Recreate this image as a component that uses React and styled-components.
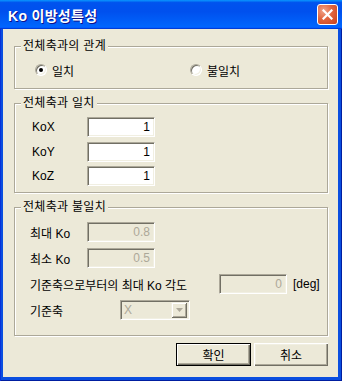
import React from 'react';
import styled, { createGlobalStyle } from 'styled-components';

const Global = createGlobalStyle`
    html, body {
        margin: 0;
        padding: 0;
        background: #fff;
    }
    body {
        font-family: "Liberation Sans", "Noto Sans CJK KR", sans-serif;
        font-size: 12px;
        color: #000;
    }
`
const Window = styled.div`
    width: 342px;
    height: 381px;
    display: flex;
    flex-direction: column;
    background: #0a4ee0;
    box-shadow: inset 1px 0 0 #0831d9, inset -1px 0 0 #001ea0, inset 0 -1px 0 #001ea0;
`
const TitleBar = styled.div`
    height: 29px;
    flex: none;
    display: flex;
    align-items: center;
    justify-content: space-between;
    padding: 0 4px 0 8px;
    background: linear-gradient(180deg, #0997ff, #0053ee 9%, #0050ee 40%, #0063fb 85%, #0066ff 93%, #005bff 95%, #003dd7 97%, #003dd7);
`
const TitleText = styled.div`
    color: #fff;
    font-weight: bold;
    font-size: 14px;
    letter-spacing: 0.3px;
    text-shadow: 1px 1px 0 #0f1089;
`
const CloseBtn = styled.div`
    width: 21px;
    height: 21px;
    box-sizing: border-box;
    border: 1px solid #fff;
    border-radius: 3px;
    background: radial-gradient(circle at 30% 30%, #f0a48a 0%, #e1653f 45%, #c8401a 100%);
    display: flex;
    align-items: center;
    justify-content: center;
`
const Client = styled.div`
    flex: 1;
    margin: 0 4px 4px 3px;
    background: #ece9d8;
    padding: 17px 10px 0 11px;
    display: flex;
    flex-direction: column;
`
const Group = styled.div`
    position: relative;
    box-sizing: border-box;
    width: 314px;
    height: ${p => p.$h}px;
    margin-bottom: 14px;
    border: 1px solid #aca899;
    box-shadow: 1px 1px 0 #fff, inset 1px 1px 0 #fff;
    padding: ${p => p.$pt}px 0 0 ${p => p.$pl}px;
    display: flex;
    flex-direction: column;
    gap: ${p => p.$gap || 0}px;
`
const Caption = styled.div`
    position: absolute;
    top: -8px;
    left: 6px;
    padding: 0 2px;
    line-height: 14px;
    background: #ece9d8;
    letter-spacing: 0.3px;
`
const RadioRow = styled.div`
    display: flex;
    align-items: center;
    height: 14px;
`
const RadioItem = styled.label`
    display: flex;
    align-items: center;
    gap: 5px;
    width: ${p => p.$w}px;
`
const RadioDot = styled.span`
    position: relative;
    width: 12px;
    height: 12px;
    box-sizing: border-box;
    border-radius: 50%;
    border: 1px solid;
    border-color: #aca899 #fff #fff #aca899;
    box-shadow: inset 1px 1px 0 #716f64, inset -1px -1px 0 #f1efe2;
    background: #fff;
    &::after {
        content: '';
        display: ${p => (p.$on ? 'block' : 'none')};
        position: absolute;
        left: 3px;
        top: 3px;
        width: 4px;
        height: 4px;
        border-radius: 50%;
        background: #000;
    }
`
const Row = styled.div`
    display: flex;
    align-items: center;
    height: 20px;
`
const Label = styled.div`
    width: ${p => p.$w}px;
    flex: none;
    white-space: nowrap;
`
const Field = styled.input`
    box-sizing: border-box;
    width: 68px;
    height: 20px;
    margin: 0;
    padding: 0 4px 0 0;
    text-align: right;
    font-family: "Liberation Sans", sans-serif;
    font-size: 12px;
    color: ${p => (p.disabled ? '#aca899' : '#000')};
    -webkit-text-fill-color: ${p => (p.disabled ? '#aca899' : '#000')};
    background: ${p => (p.disabled ? '#ece9d8' : '#fff')};
    border: 1px solid;
    border-color: #aca899 #fff #fff #aca899;
    box-shadow: inset 1px 1px 0 #716f64, inset -1px -1px 0 #f1efe2;
    outline: none;
`
const Unit = styled.div`
    margin-left: 6px;
`
const Select = styled.div`
    box-sizing: border-box;
    width: 70px;
    height: 20px;
    border: 1px solid;
    border-color: #aca899 #fff #fff #aca899;
    box-shadow: inset 1px 1px 0 #716f64, inset -1px -1px 0 #f1efe2;
    background: #ece9d8;
    display: flex;
    align-items: center;
    justify-content: space-between;
    padding: 2px 2px 2px 3px;
    color: #aca899;
`
const DropBtn = styled.div`
    width: 16px;
    height: 16px;
    box-sizing: border-box;
    background: #ece9d8;
    box-shadow: inset 1px 1px 0 #f1efe2, inset -1px -1px 0 #716f64, inset 2px 2px 0 #fff, inset -2px -2px 0 #aca899;
    display: flex;
    align-items: center;
    justify-content: center;
`
const ButtonBar = styled.div`
    display: flex;
    justify-content: flex-end;
    gap: 3px;
    margin-top: -7px;
`
const Button = styled.button`
    box-sizing: border-box;
    width: ${p => p.$w}px;
    height: 23px;
    margin: 0;
    padding: 0;
    font-family: "Liberation Sans", "Noto Sans CJK KR", sans-serif;
    font-size: 12px;
    color: #000;
    background: #ece9d8;
    border: ${p => (p.$default ? '1px solid #000' : 'none')};
    box-shadow: ${p => (p.$default
        ? 'inset 1px 1px 0 #fff, inset -1px -1px 0 #716f64, inset -2px -2px 0 #aca899'
        : 'inset 1px 1px 0 #fff, inset -1px -1px 0 #716f64, inset -2px -2px 0 #aca899, inset 2px 2px 0 #f1efe2')};
`

const App = () => (
    <Window>
        <Global />
        <TitleBar>
            <TitleText>Ko 이방성특성</TitleText>
            <CloseBtn>
                <svg width="11" height="11" viewBox="0 0 11 11">
                    <path d="M1.5 1.5 L9.5 9.5 M9.5 1.5 L1.5 9.5" stroke="#fff" strokeWidth="2.2" strokeLinecap="square" />
                </svg>
            </CloseBtn>
        </TitleBar>
        <Client>
            <Group $h={43} $pt={16} $pl={20}>
                <Caption>전체축과의 관계</Caption>
                <RadioRow>
                    <RadioItem $w={155}><RadioDot $on />일치</RadioItem>
                    <RadioItem $w={100}><RadioDot />불일치</RadioItem>
                </RadioRow>
            </Group>
            <Group $h={90} $pt={13} $pl={17} $gap={4.5}>
                <Caption>전체축과 일치</Caption>
                <Row><Label $w={55}>KoX</Label><Field readOnly value="1" /></Row>
                <Row><Label $w={55}>KoY</Label><Field readOnly value="1" /></Row>
                <Row><Label $w={55}>KoZ</Label><Field readOnly value="1" /></Row>
            </Group>
            <Group $h={129} $pt={14} $pl={15} $gap={6}>
                <Caption>전체축과 불일치</Caption>
                <Row><Label $w={57}>최대 Ko</Label><Field disabled value="0.8" /></Row>
                <Row><Label $w={57}>최소 Ko</Label><Field disabled value="0.5" /></Row>
                <Row>
                    <Label $w={189}>기준축으로부터의 최대 Ko 각도</Label>
                    <Field disabled value="0" />
                    <Unit>[deg]</Unit>
                </Row>
                <Row>
                    <Label $w={90}>기준축</Label>
                    <Select>
                        X
                        <DropBtn>
                            <svg width="7" height="4" viewBox="0 0 7 4">
                                <path d="M0 0 H7 L3.5 4 Z" fill="#aca899" />
                            </svg>
                        </DropBtn>
                    </Select>
                </Row>
            </Group>
            <ButtonBar>
                <Button $w={75} $default>확인</Button>
                <Button $w={74}>취소</Button>
            </ButtonBar>
        </Client>
    </Window>
);

export default App;
